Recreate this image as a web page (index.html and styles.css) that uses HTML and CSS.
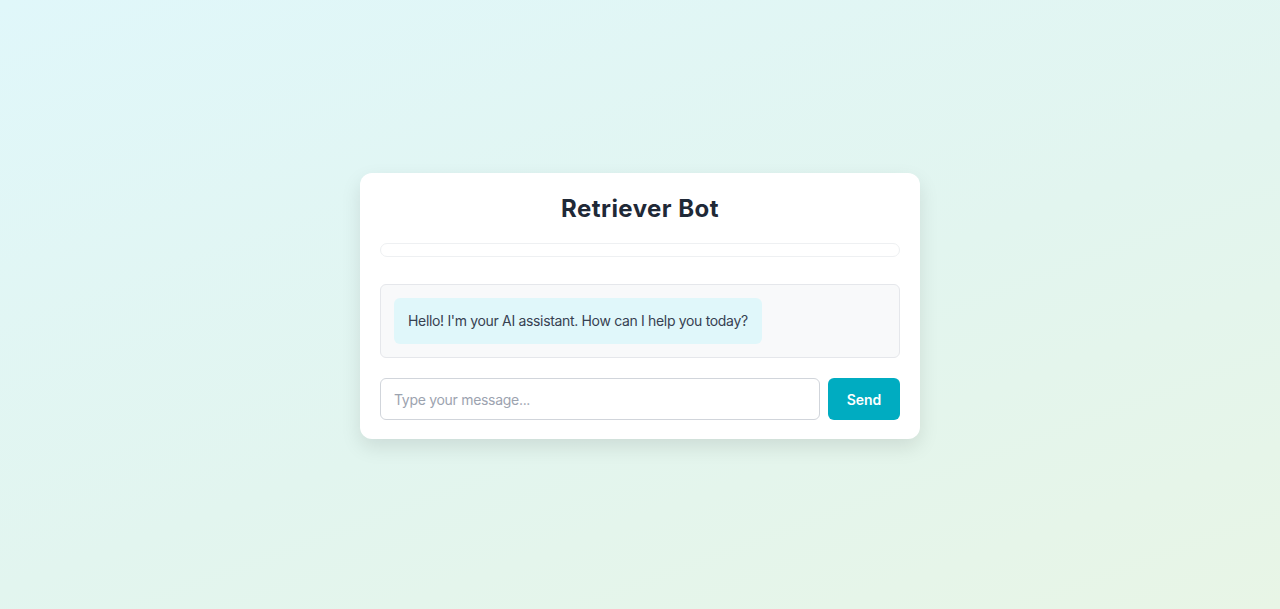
FILE: index.html
```html
<!DOCTYPE html>
<html lang="en">
<head>
<meta charset="utf-8">
<title>Retriever Bot</title>
<link rel="stylesheet" href="styles.css">
</head>
<body>
  <main class="card">
    <h1 class="title">Retriever Bot</h1>
    <div class="status"></div>
    <div class="chat">
      <div class="bubble">Hello! I'm your AI assistant. How can I help you today?</div>
    </div>
    <form class="composer">
      <input class="input" type="text" placeholder="Type your message...">
      <button class="send" type="button">Send</button>
    </form>
  </main>
</body>
</html>
```
FILE: styles.css
```css
* { box-sizing: border-box; }
html, body { margin: 0; padding: 0; }
body {
  height: 100vh;
  font-family: Inter, "Noto Sans", sans-serif;
  background: linear-gradient(160deg, #e0f7fa 0%, #e2f5ef 55%, #e8f5e6 100%);
  display: flex;
  align-items: center;
  justify-content: center;
}
.card {
  width: 560px;
  background: #ffffff;
  border-radius: 12px;
  padding: 20px 20px 19px;
  box-shadow: 0 8px 20px rgba(0, 0, 0, 0.1);
  display: flex;
  flex-direction: column;
  margin-top: 3px;
}
.title {
  margin: 0 0 18px;
  text-align: center;
  font-size: 24px;
  line-height: 32px;
  font-weight: 700;
  letter-spacing: 0.45px;
  color: #1f2937;
}
.status {
  height: 14px;
  border: 1px solid #eef0f2;
  border-radius: 7px;
  margin-bottom: 27px;
}
.chat {
  background: #f8f9fa;
  border: 1px solid #e5e7eb;
  border-radius: 6px;
  padding: 13px;
  display: flex;
  align-items: flex-start;
}
.bubble {
  background: #e0f7fa;
  color: #374151;
  font-size: 14px;
  line-height: 20px;
  letter-spacing: -0.33px;
  padding: 13px 14px;
  border-radius: 6px;
}
.composer {
  margin: 20px 0 0;
  display: flex;
  gap: 8px;
}
.input {
  flex: 1;
  height: 42px;
  border: 1px solid #d1d5db;
  border-radius: 6px;
  padding: 0 13px;
  font-family: inherit;
  font-size: 14px;
  letter-spacing: -0.3px;
  color: #374151;
  background: #fff;
  outline: none;
}
.input::placeholder { color: #9ca3af; }
.send {
  width: 72px;
  height: 42px;
  border: none;
  border-radius: 6px;
  background: #00acc1;
  color: #ffffff;
  font-family: inherit;
  font-size: 14px;
  font-weight: 600;
  cursor: pointer;
}
```
